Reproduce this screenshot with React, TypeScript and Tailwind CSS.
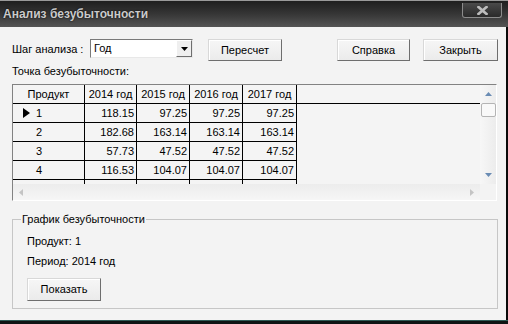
import React from "react";

const years = ["2014 год", "2015 год", "2016 год", "2017 год"];
const colWidths = ["w-[52px]", "w-[53px]", "w-[53px]", "w-[54px]"];

const rows = [
  { id: "1", values: ["118.15", "97.25", "97.25", "97.25"] },
  { id: "2", values: ["182.68", "163.14", "163.14", "163.14"] },
  { id: "3", values: ["57.73", "47.52", "47.52", "47.52"] },
  { id: "4", values: ["116.53", "104.07", "104.07", "104.07"] },
  { id: "5", values: ["", "", "", ""] },
];

function WinButton({ label, className }: { label: string; className: string }) {
  return (
    <button
      type="button"
      className={`h-[22px] flex items-center justify-center bg-gradient-to-b from-[#f6f6f6] to-[#ebebeb] border border-t-[#d8d8d8] border-l-[#d8d8d8] border-b-[#6e6e6e] border-r-[#6e6e6e] shadow-[inset_1px_1px_0_#ffffff] text-[11px] text-black ${className}`}
    >
      {label}
    </button>
  );
}

function Arrow({ dir, color }: { dir: "up" | "down" | "left" | "right"; color: string }) {
  const pts = {
    up: "0,4 3.5,0 7,4",
    down: "0,0 7,0 3.5,4",
    left: "4,0 4,7 0,3.5",
    right: "0,0 0,7 4,3.5",
  }[dir];
  const vertical = dir === "up" || dir === "down";
  return (
    <svg width={vertical ? 7 : 4} height={vertical ? 4 : 7} viewBox={vertical ? "0 0 7 4" : "0 0 4 7"}>
      <polygon points={pts} fill={color} />
    </svg>
  );
}

export default function App() {
  return (
    <div className="w-[508px] h-[324px] flex flex-col bg-[#0e0e0e] overflow-hidden font-['Liberation_Sans',Arial,sans-serif] text-[11px] text-black">
      {/* Title bar */}
      <div className="h-[27px] shrink-0 flex items-start border-t border-[#9a9a9a] bg-gradient-to-b from-[#1f1f1f] via-[#363636] to-[#555555]">
        <p className="flex-1 pl-[3px] pt-[6px] font-bold text-[12px] leading-[15px] text-[#cacaca] [text-shadow:0_0_2px_#000]">
          Анализ безубыточности
        </p>
        <div className="mr-[6px] mt-[2px] w-[40px] h-[15px] flex items-center justify-center rounded-b-[3px] border border-t-0 border-[#8c8c8c] bg-gradient-to-b from-[#4a4a4a] to-[#2a2a2a]">
          <svg width="11" height="9" viewBox="0 0 11 9">
            <path d="M1.5 1 L9.5 8 M9.5 1 L1.5 8" stroke="#bcbcbc" strokeWidth="2.6" strokeLinecap="square" />
          </svg>
        </div>
      </div>

      <div className="flex flex-1 min-h-0">
        {/* Client area */}
        <div className="w-[506px] h-[293px] bg-[#f3f3f3] pl-[12px] pt-[12px] flex flex-col">
          {/* Toolbar row */}
          <div className="flex items-start h-[22px]">
            <span className="w-[78px] leading-[20px]">Шаг анализа :</span>
            <div className="w-[103px] h-[19px] flex items-stretch bg-white border border-t-[#7a7a7a] border-l-[#7a7a7a] border-b-[#e8e8e8] border-r-[#e8e8e8]">
              <span className="flex-1 pl-[3px] leading-[17px]">Год</span>
              <div className="w-[16px] flex items-center justify-center bg-[#efefef] border border-t-[#ffffff] border-l-[#ffffff] border-b-[#6e6e6e] border-r-[#6e6e6e]">
                <Arrow dir="down" color="#000" />
              </div>
            </div>
            <WinButton label="Пересчет" className="ml-[15px] w-[74px]" />
            <WinButton label="Справка" className="ml-[55px] w-[73px]" />
            <WinButton label="Закрыть" className="ml-[13px] w-[75px]" />
          </div>

          <p className="mt-[4px] leading-[13px]">Точка безубыточности:</p>

          {/* Grid */}
          <div className="mt-[6px] w-[485px] h-[117px] flex flex-col border border-t-[#828282] border-l-[#828282] border-b-[#ffffff] border-r-[#ffffff]">
            <div className="flex h-[99px]">
              <div className="flex-1 overflow-hidden bg-[#f4f4f4]">
                <div className="flex h-[19px] border-b border-black">
                  <div className="w-[72px] border-r border-black flex items-center justify-center">Продукт</div>
                  {years.map((y, i) => (
                    <div key={y} className={`${colWidths[i]} border-r border-black flex items-center justify-center`}>
                      {y}
                    </div>
                  ))}
                </div>
                {rows.map((r, ri) => (
                  <div key={r.id} className="flex h-[19px]">
                    <div className="w-[72px] border-r border-b border-black flex items-center">
                      <span className="w-[23px] pl-[10px] flex items-center">
                        {ri === 0 && (
                          <svg width="7" height="10" viewBox="0 0 7 10">
                            <polygon points="0,0 7,5 0,10" fill="#000" />
                          </svg>
                        )}
                      </span>
                      <span>{r.id}</span>
                    </div>
                    {r.values.map((v, i) => (
                      <div
                        key={i}
                        className={`${colWidths[i]} border-r border-b border-black flex items-center justify-end pr-[2px]`}
                      >
                        {v}
                      </div>
                    ))}
                  </div>
                ))}
              </div>
              {/* Vertical scrollbar */}
              <div className="w-[16px] flex flex-col items-center bg-gradient-to-r from-[#f7f7f7] to-[#ececec]">
                <div className="h-[17px] flex items-center justify-center">
                  <Arrow dir="up" color="#6a8cb4" />
                </div>
                <div className="w-[15px] h-[14px] mt-[1px] rounded-[2px] border border-[#b4b4b4] bg-[#f9f9f9]" />
                <div className="flex-1" />
                <div className="h-[17px] flex items-center justify-center pb-[2px]">
                  <Arrow dir="down" color="#6a8cb4" />
                </div>
              </div>
            </div>
            {/* Horizontal scrollbar */}
            <div className="flex h-[16px]">
              <div className="flex-1 flex items-center justify-between px-[6px] bg-gradient-to-b from-[#ececec] to-[#f6f6f6]">
                <Arrow dir="left" color="#c4c4c4" />
                <Arrow dir="right" color="#c4c4c4" />
              </div>
              <div className="w-[16px] bg-[#f3f3f3]" />
            </div>
          </div>

          {/* Group box */}
          <fieldset className="mt-[12px] w-[486px] h-[96px] border border-[#c6c6c6] flex flex-col">
            <legend className="ml-[8px] px-[1px] leading-[13px]">График безубыточности</legend>
            <div className="pl-[14px] flex flex-col">
              <p className="mt-[9px] leading-[13px]">Продукт: 1</p>
              <p className="mt-[7px] leading-[13px]">Период: 2014 год</p>
              <WinButton label="Показать" className="mt-[10px] w-[74px] h-[23px]" />
            </div>
          </fieldset>
        </div>
        <div className="flex-1 bg-[#0a0a0a]" />
      </div>

      {/* Bottom frame */}
      <div className="h-[4px] shrink-0 border-t border-[#2f5a55] bg-[#101414]" />
    </div>
  );
}
